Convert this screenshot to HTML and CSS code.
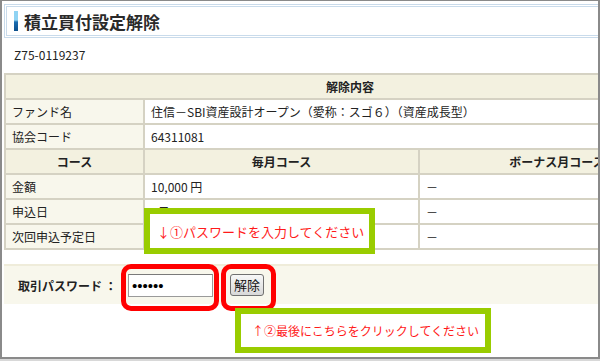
FILE: index.html
```html
<!DOCTYPE html>
<html lang="ja">
<head>
    <meta charset="UTF-8">
    <link rel="stylesheet" href="styles.css">
</head>
<body>
    <div class="frame">
        <div class="page-title">
            <span class="title-bar"></span>
            <h1>積立買付設定解除</h1>
        </div>
        <div class="account-no">Z75-0119237</div>
        <table class="detail-table">
            <colgroup>
                <col class="col-label">
                <col class="col-month">
                <col class="col-bonus">
            </colgroup>
            <tr>
                <th colspan="3">解除内容</th>
            </tr>
            <tr>
                <td class="label">ファンド名</td>
                <td colspan="2">住信－SBI資産設計オープン（愛称：スゴ６）（資産成長型）</td>
            </tr>
            <tr>
                <td class="label">協会コード</td>
                <td colspan="2">64311081</td>
            </tr>
            <tr>
                <th>コース</th>
                <th>毎月コース</th>
                <th>ボーナス月コース</th>
            </tr>
            <tr>
                <td class="label">金額</td>
                <td>10,000 円</td>
                <td>－</td>
            </tr>
            <tr>
                <td class="label">申込日</td>
                <td>5日</td>
                <td>－</td>
            </tr>
            <tr>
                <td class="label">次回申込予定日</td>
                <td></td>
                <td>－</td>
            </tr>
        </table>
        <div class="password-row">
            <label class="password-label">取引パスワード ：</label>
            <input class="password-input" type="password" value="123456">
            <button class="cancel-button">解除</button>
        </div>

        <!-- annotations -->
        <div class="mark mark-input"></div>
        <div class="mark mark-button"></div>
        <div class="note note-1">↓①パスワードを入力してください</div>
        <div class="note note-2">↑②最後にこちらをクリックしてください</div>
    </div>
</body>
</html>
```

FILE: styles.css
```css
body {
    margin: 0;
    padding: 0;
    background-color: #d8d8d8;
    font-family: "Noto Sans CJK JP", "Liberation Sans", sans-serif;
    font-size: 12px;
    color: #222;
}
.frame {
    position: relative;
    width: 600px;
    height: 359px;
    box-sizing: border-box;
    border: 2px solid #8a8a8a;
    border-top-width: 1px;
    background-color: white;
    overflow: hidden;
}
.page-title {
    display: flex;
    align-items: center;
    width: 620px;
    height: 34px;
    box-sizing: border-box;
    margin: 3px 0 0 2px;
    border: 3px double #c9dbeb;
    padding-left: 7px;
}
.title-bar {
    width: 4px;
    height: 20px;
    background: linear-gradient(#8fd3f3 0, #8fd3f3 45%, #1a6cb0 55%, #0c4f8c 100%);
}
.page-title h1 {
    margin: 0 0 0 6px;
    font-size: 17px;
    font-weight: bold;
    color: #2a2a2a;
}
.account-no {
    margin: 7px 0 0 12px;
    height: 20px;
    line-height: 20px;
}
.detail-table {
    margin: 8px 0 0 2px;
    width: 692px;
    border-collapse: collapse;
    table-layout: fixed;
}
.col-label {
    width: 139px;
}
.col-month {
    width: 275px;
}
.detail-table th, .detail-table td {
    border: 2px solid #d5d2c3;
    height: 23px;
    padding: 0 6px;
    line-height: 18px;
    white-space: nowrap;
}
.detail-table th {
    background-color: #f3f1e0;
    font-weight: bold;
    text-align: center;
}
.detail-table td {
    text-align: left;
}
.detail-table td.label {
    background-color: #f8f7ec;
}
.password-row {
    display: flex;
    align-items: center;
    margin: 14px 0 0 2px;
    height: 38px;
    border-top: 2px solid #efecda;
    background-color: #f8f7ec;
    padding-left: 14px;
}
.password-label {
    font-weight: bold;
    width: 110px;
}
.password-input {
    width: 85px;
    height: 23px;
    box-sizing: border-box;
    border: 1px solid #9a9a9a;
    border-top-color: #7a7a7a;
    padding: 0 3px;
    font-size: 15px;
    color: #000;
    margin: 0;
}
.cancel-button {
    margin-left: 17px;
    height: 22px;
    padding: 0 3px;
    border: 1px solid #707070;
    border-radius: 3px;
    background: linear-gradient(#f8f8f8, #d8d8d8);
    font-family: "Noto Sans CJK JP", sans-serif;
    font-size: 13px;
    line-height: 18px;
    color: #111;
}
.mark {
    position: absolute;
    top: 263px;
    height: 37px;
    border: 5px solid #ff0000;
    border-radius: 10px;
}
.mark-input {
    left: 119px;
    width: 88px;
}
.mark-button {
    left: 219px;
    width: 45px;
}
.note {
    position: absolute;
    box-sizing: border-box;
    border: 6px solid #99cc00;
    background-color: white;
    color: #ff1a1a;
    font-size: 13px;
    padding-left: 7px;
    display: flex;
    align-items: center;
    white-space: nowrap;
}
.note-1 {
    left: 142px;
    top: 207px;
    width: 231px;
    height: 46px;
}
.note-2 {
    left: 233px;
    top: 307px;
    width: 256px;
    height: 45px;
    font-size: 12px;
    padding-left: 11px;
}
```
